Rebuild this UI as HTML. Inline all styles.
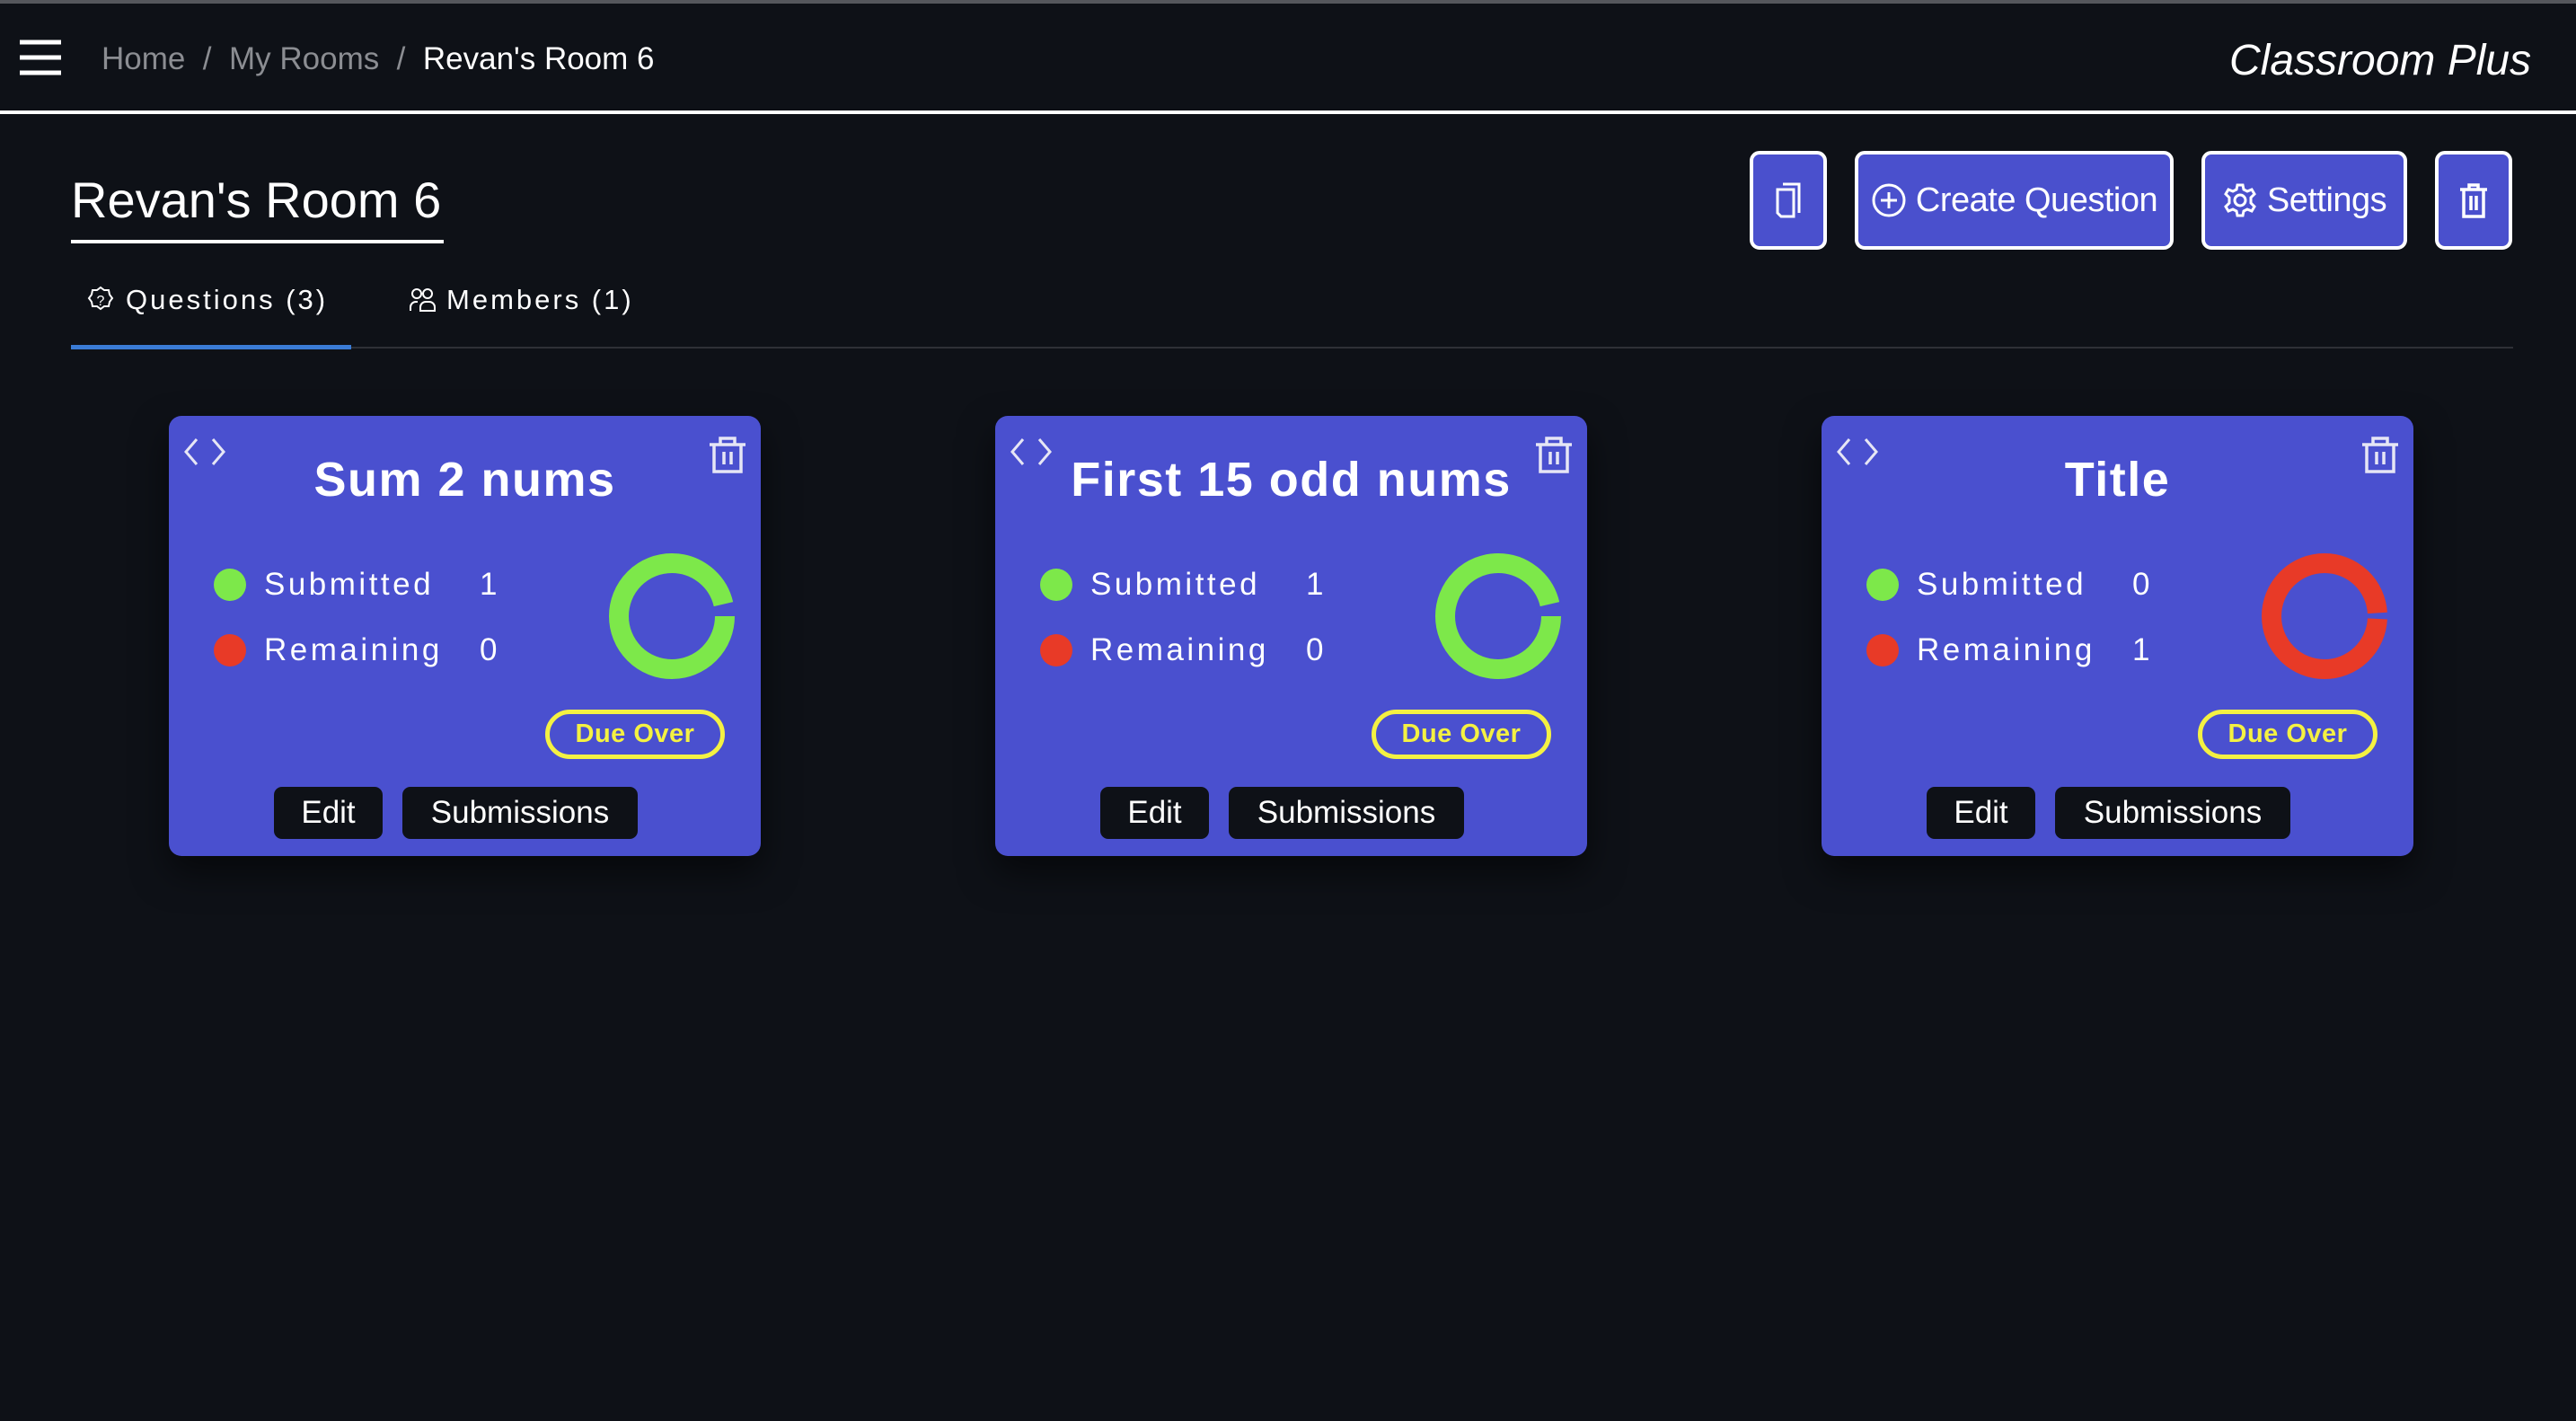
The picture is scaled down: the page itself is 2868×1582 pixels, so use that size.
<!DOCTYPE html>
<html><head><meta charset="utf-8"><style>
*{margin:0;padding:0;box-sizing:border-box}
body{width:2868px;height:1582px;background:#0e1117;font-family:"Liberation Sans",sans-serif;color:#fff;position:relative;overflow:hidden}
.abs{position:absolute}
.topline{left:0;top:0;width:2868px;height:4px;background:#55575c}
.hline{left:0;top:123px;width:2868px;height:4px;background:#fff}
.bc{top:46px;font-size:35px;color:#8b8d92;white-space:nowrap}
.btn{position:absolute;top:168px;height:110px;background:#4a50cd;border:4px solid #fff;border-radius:11px;display:flex;align-items:center;justify-content:center;font-size:38px;color:#fff;gap:10px;letter-spacing:-0.5px}
.card{position:absolute;top:463px;width:659px;height:490px;background:#4a50cf;border-radius:14px;box-shadow:0 18px 40px rgba(0,0,0,.55)}
.ct{position:absolute;left:0;right:0;top:40px;text-align:center;font-weight:bold;font-size:54px;letter-spacing:1.5px}
.dot{position:absolute;left:50px;width:36px;height:36px;border-radius:50%}
.lt{position:absolute;left:106px;font-size:35px;letter-spacing:3.5px}
.num{position:absolute;left:346px;font-size:35px}
.due{position:absolute;left:419px;top:327px;width:200px;height:55px;border:5px solid #f4f142;border-radius:28px;color:#f4f142;font-weight:bold;font-size:29px;display:flex;align-items:center;justify-content:center;letter-spacing:0.5px}
.cb{position:absolute;top:413px;height:58px;background:#0e1117;border-radius:9px;font-size:35px;display:flex;align-items:center;justify-content:center}
</style></head><body>
<div class="abs topline"></div>
<div class="abs hline"></div>
<svg class="abs" style="left:22px;top:44px" width="46" height="40"><g stroke="#fff" stroke-width="5"><line x1="0" y1="3" x2="46" y2="3"/><line x1="0" y1="20" x2="46" y2="20"/><line x1="0" y1="37" x2="46" y2="37"/></g></svg>
<div class="abs bc" style="left:113px">Home&nbsp;&nbsp;/&nbsp;&nbsp;My Rooms&nbsp;&nbsp;/&nbsp;&nbsp;<span style="color:#fff">Revan's Room 6</span></div>
<div class="abs" style="left:2482px;top:40px;font-size:48px;font-style:italic">Classroom Plus</div>

<div class="abs" style="left:79px;top:190px;font-size:56px">Revan's Room 6</div>
<div class="abs" style="left:79px;top:267px;width:415px;height:4px;background:#fff"></div>

<svg class="abs" style="left:97px;top:318px" width="30" height="32" viewBox="0 0 30 32"><path d="M15 2l4 3 5 0 1 5 3 4-3 4-1 5-5 0-4 3-4-3-5 0-1-5-3-4 3-4 1-5 5 0z" fill="none" stroke="#fff" stroke-width="2"/><text x="15" y="22" font-size="16" fill="#fff" text-anchor="middle" font-family="Liberation Sans">?</text></svg>
<div class="abs" style="left:140px;top:316px;font-size:31px;letter-spacing:3px">Questions (3)</div>
<svg class="abs" style="left:455px;top:320px" width="30" height="28" viewBox="0 0 30 28"><g fill="none" stroke="#fff" stroke-width="2"><circle cx="9" cy="7" r="5"/><circle cx="21" cy="7" r="5"/><path d="M2 26v-4a6 6 0 0 1 6-6h2M13 26v-4a6 6 0 0 1 6-6h4a6 6 0 0 1 6 6v4z"/></g></svg>
<div class="abs" style="left:497px;top:316px;font-size:31px;letter-spacing:3px">Members (1)</div>
<div class="abs" style="left:79px;top:386px;width:2719px;height:2px;background:#2e3036"></div>
<div class="abs" style="left:79px;top:384px;width:312px;height:5px;background:#3a7bd5"></div>

<div class="btn" style="left:1948px;width:86px"><svg width="36" height="44" viewBox="0 0 36 44"><g fill="none" stroke="#fff" stroke-width="3"><path d="M12 4h18v32"/><path d="M6 10h18v30H10l-4-4z"/></g></svg></div>
<div class="btn" style="left:2065px;width:355px"><svg width="40" height="40" viewBox="0 0 40 40"><g fill="none" stroke="#fff" stroke-width="3"><circle cx="20" cy="20" r="17"/><path d="M20 11v18M11 20h18"/></g></svg>Create Question</div>
<div class="btn" style="left:2451px;width:229px"><svg width="40" height="42" viewBox="0 0 40 40"><g fill="none" stroke="#fff" stroke-width="3"><path d="M17 3h6l1 5 4 2 5-2 3 5-4 4v6l4 4-3 5-5-2-4 2-1 5h-6l-1-5-4-2-5 2-3-5 4-4v-6l-4-4 3-5 5 2 4-2z"/><circle cx="20" cy="20" r="6"/></g></svg>Settings</div>
<div class="btn" style="left:2711px;width:86px"><svg width="34" height="40" viewBox="0 0 34 40"><g fill="none" stroke="#fff" stroke-width="3.5"><path d="M2 8h30M12 8V3h10v5M6 8v30h22V8M14 15v16M20 15v16"/></g></svg></div>

<div class="card" style="left:188px">
<svg class="abs" style="left:16px;top:24px" width="48" height="32" viewBox="0 0 48 32"><g fill="none" stroke="#e6e6f5" stroke-width="3"><path d="M15 2L3 16l12 14M33 2l12 14-12 14"/></g></svg>
<svg class="abs" style="left:602px;top:22px" width="40" height="42" viewBox="0 0 40 42"><g fill="none" stroke="#e6e6f5" stroke-width="3.5"><path d="M0 10h40M12 10V3h16v7M5 10v30h30V10M16 18v14M24 18v14"/></g></svg>
<div class="ct">Sum 2 nums</div>
<div class="dot" style="top:170px;background:#7de84a"></div><div class="lt" style="top:168px">Submitted</div><div class="num" style="top:168px">1</div>
<div class="dot" style="top:243px;background:#e83a27"></div><div class="lt" style="top:241px">Remaining</div><div class="num" style="top:241px">0</div>
<svg class="abs" style="left:490px;top:153px" width="140" height="140"><circle cx="70" cy="70" r="59" fill="none" stroke="#7de84a" stroke-width="22" stroke-dasharray="357 14"/></svg>
<div class="due">Due Over</div>
<div class="cb" style="left:117px;width:121px">Edit</div>
<div class="cb" style="left:260px;width:262px">Submissions</div>
</div>

<div class="card" style="left:1108px">
<svg class="abs" style="left:16px;top:24px" width="48" height="32" viewBox="0 0 48 32"><g fill="none" stroke="#e6e6f5" stroke-width="3"><path d="M15 2L3 16l12 14M33 2l12 14-12 14"/></g></svg>
<svg class="abs" style="left:602px;top:22px" width="40" height="42" viewBox="0 0 40 42"><g fill="none" stroke="#e6e6f5" stroke-width="3.5"><path d="M0 10h40M12 10V3h16v7M5 10v30h30V10M16 18v14M24 18v14"/></g></svg>
<div class="ct">First 15 odd nums</div>
<div class="dot" style="top:170px;background:#7de84a"></div><div class="lt" style="top:168px">Submitted</div><div class="num" style="top:168px">1</div>
<div class="dot" style="top:243px;background:#e83a27"></div><div class="lt" style="top:241px">Remaining</div><div class="num" style="top:241px">0</div>
<svg class="abs" style="left:490px;top:153px" width="140" height="140"><circle cx="70" cy="70" r="59" fill="none" stroke="#7de84a" stroke-width="22" stroke-dasharray="357 14"/></svg>
<div class="due">Due Over</div>
<div class="cb" style="left:117px;width:121px">Edit</div>
<div class="cb" style="left:260px;width:262px">Submissions</div>
</div>

<div class="card" style="left:2028px">
<svg class="abs" style="left:16px;top:24px" width="48" height="32" viewBox="0 0 48 32"><g fill="none" stroke="#e6e6f5" stroke-width="3"><path d="M15 2L3 16l12 14M33 2l12 14-12 14"/></g></svg>
<svg class="abs" style="left:602px;top:22px" width="40" height="42" viewBox="0 0 40 42"><g fill="none" stroke="#e6e6f5" stroke-width="3.5"><path d="M0 10h40M12 10V3h16v7M5 10v30h30V10M16 18v14M24 18v14"/></g></svg>
<div class="ct">Title</div>
<div class="dot" style="top:170px;background:#7de84a"></div><div class="lt" style="top:168px">Submitted</div><div class="num" style="top:168px">0</div>
<div class="dot" style="top:243px;background:#e83a27"></div><div class="lt" style="top:241px">Remaining</div><div class="num" style="top:241px">1</div>
<svg class="abs" style="left:490px;top:153px" width="140" height="140"><circle cx="70" cy="70" r="59" fill="none" stroke="#e83a27" stroke-width="22" stroke-dasharray="364 7" stroke-dashoffset="-3"/></svg>
<div class="due">Due Over</div>
<div class="cb" style="left:117px;width:121px">Edit</div>
<div class="cb" style="left:260px;width:262px">Submissions</div>
</div>
</body></html>
